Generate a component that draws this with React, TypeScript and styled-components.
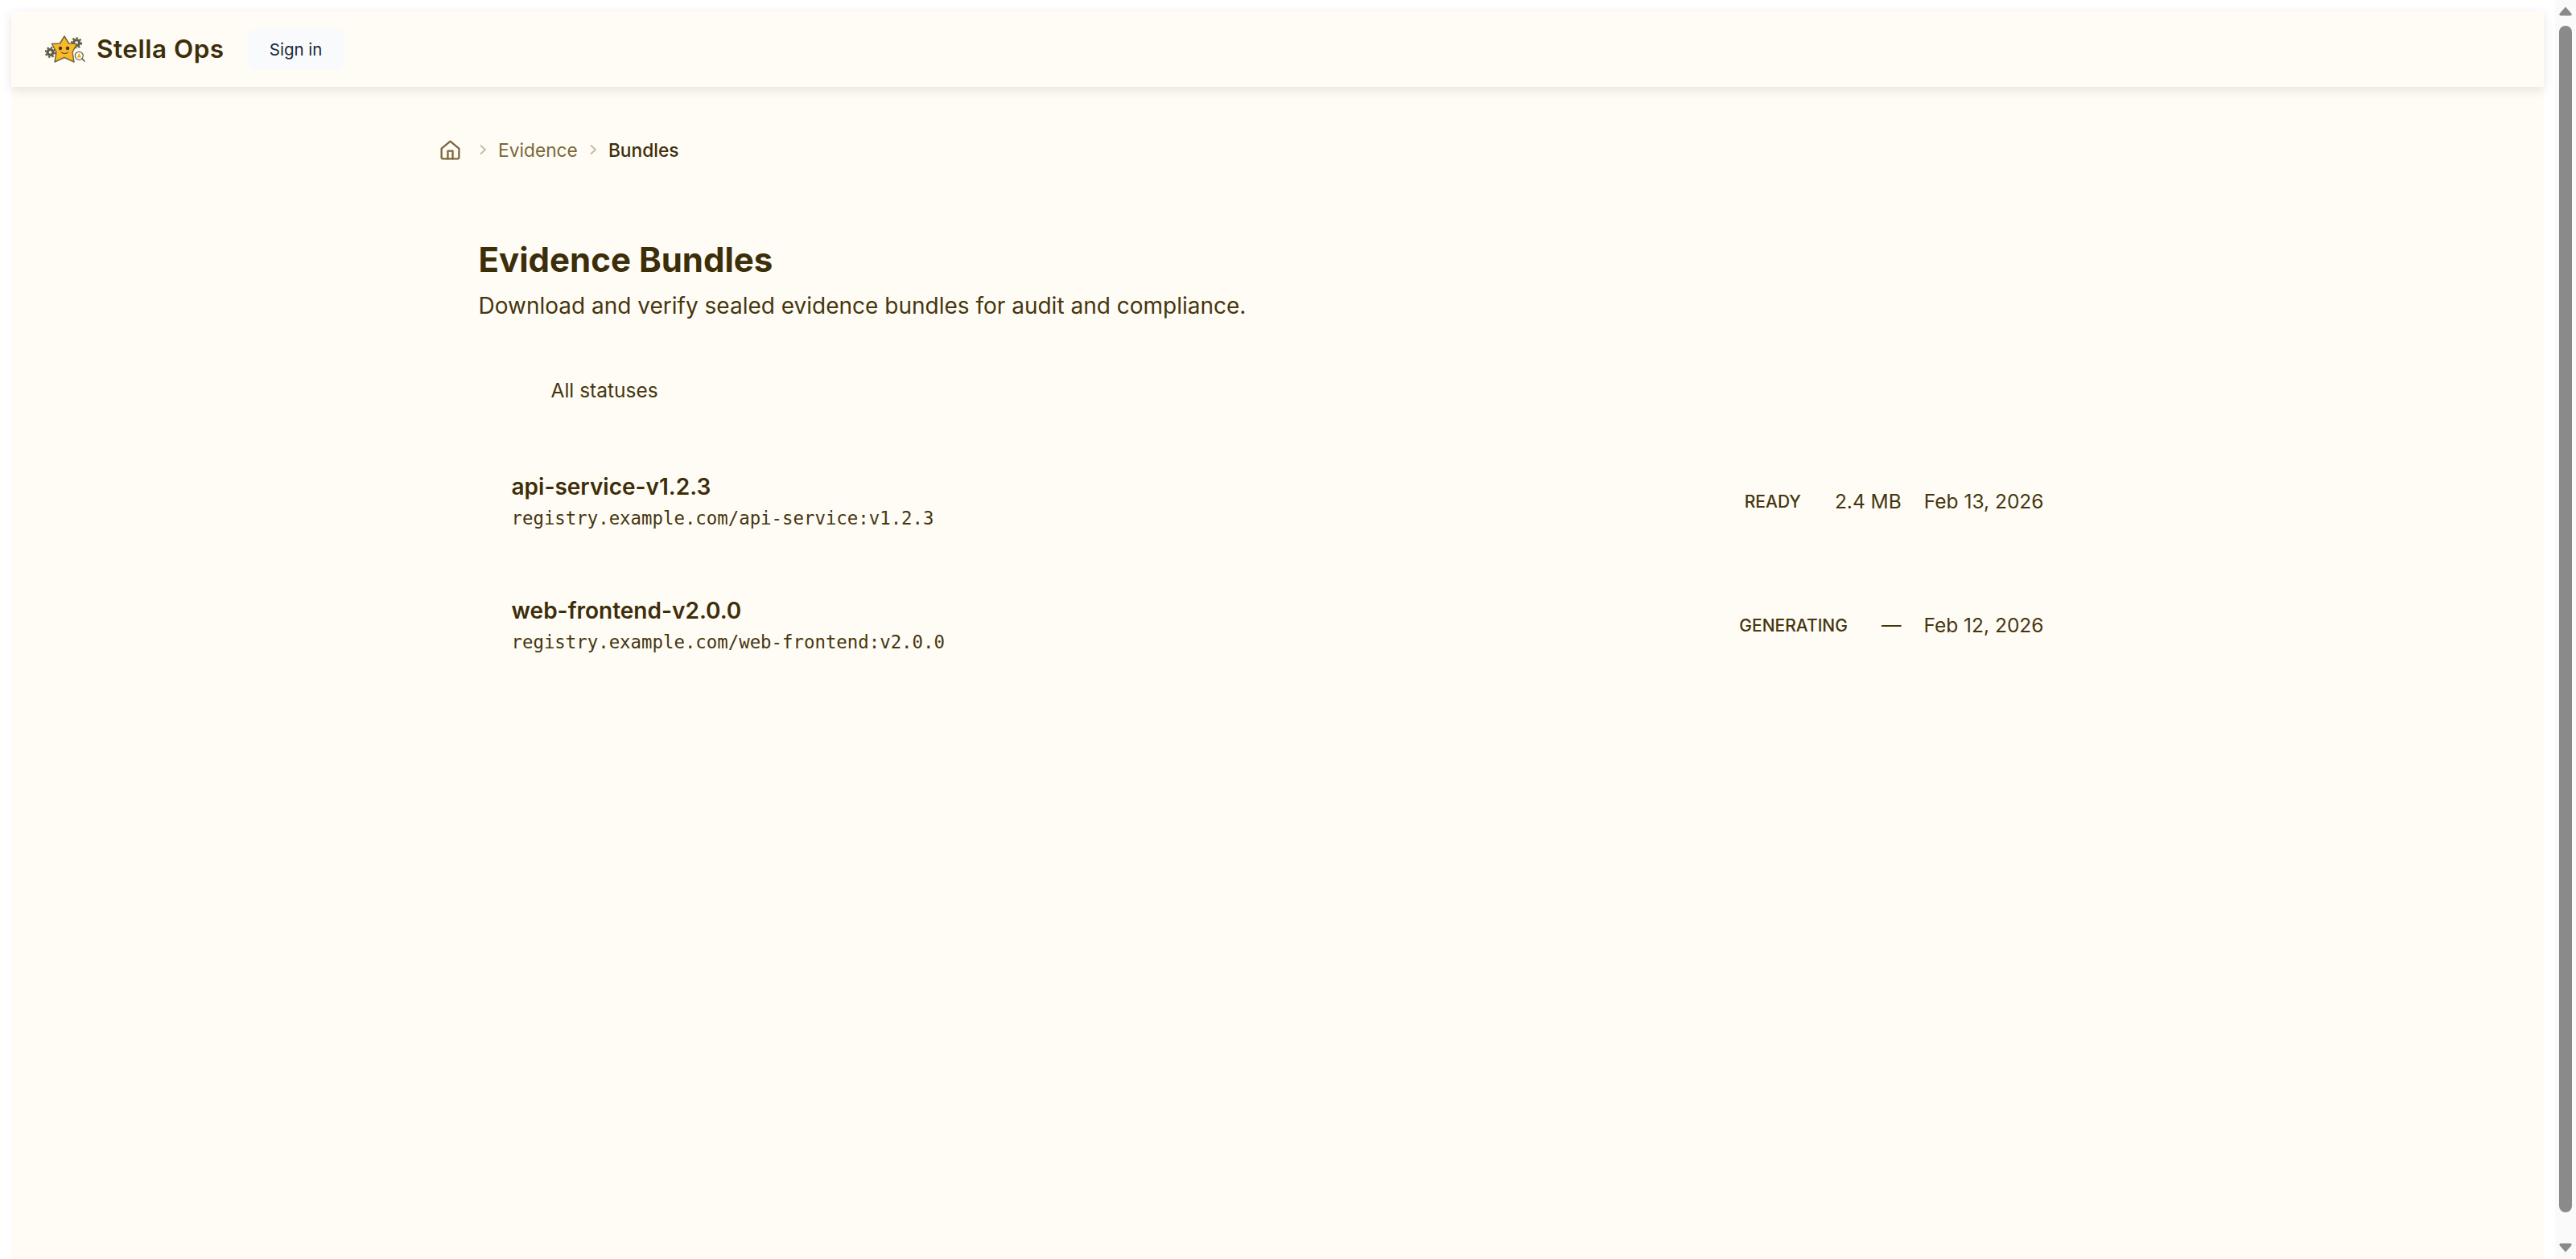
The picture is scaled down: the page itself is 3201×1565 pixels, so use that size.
import * as React from 'react';
import styled, { createGlobalStyle } from 'styled-components';

const GlobalStyle = createGlobalStyle`
  html, body {
    margin: 0;
    height: 100%;
    overflow: hidden;
    background: #ffffff;
  }
  body {
    font-family: Inter, 'Noto Sans', sans-serif;
    color: #3d2e0a;
  }
`;

const bundles = [
  { name: 'api-service-v1.2.3', image: 'registry.example.com/api-service:v1.2.3', status: 'READY', size: '2.4 MB', date: 'Feb 13, 2026' },
  { name: 'web-frontend-v2.0.0', image: 'registry.example.com/web-frontend:v2.0.0', status: 'GENERATING', size: '—', date: 'Feb 12, 2026' },
];

const Logo = () => (
  <svg width="50" height="34" viewBox="0 0 50 34" fill="none">
    <g stroke="#5f5d45">
      <circle cx="6.5" cy="21" r="3.4" strokeWidth="3.2" />
      <circle cx="6.5" cy="21" r="5.8" strokeWidth="2.2" strokeDasharray="2.4 2.1" />
      <circle cx="39" cy="9.3" r="3.6" strokeWidth="3" />
      <circle cx="39" cy="9.3" r="6" strokeWidth="2.2" strokeDasharray="2.4 2.1" />
    </g>
    <path
      d="M24 1 L29.5 10 L39.5 10.5 L34 21 L36 33 L24 27.5 L12 33 L14 21 L8.5 10.5 L18.5 10 Z"
      fill="#fbb829"
      stroke="#6d6a3a"
      strokeWidth="1.5"
      strokeLinejoin="round"
    />
    <circle cx="19" cy="16" r="2.2" fill="#3d3a22" />
    <circle cx="28" cy="16" r="2.2" fill="#3d3a22" />
    <path d="M20 21 C22 23 27 23 29 21" stroke="#3d3a22" strokeWidth="1" strokeLinecap="round" />
    <circle cx="42.3" cy="25.3" r="5" fill="#fffcf5" stroke="#6d6a4a" strokeWidth="1.3" />
    <path d="M42.3 22 L45 27.6 H39.6 Z" fill="#f0a92a" />
    <path d="M46 29 L49 32" stroke="#5f5d45" strokeWidth="1.7" strokeLinecap="round" />
  </svg>
);

const HomeIcon = () => (
  <HomeSvg width="29" height="29" viewBox="0 0 24 24" fill="none" stroke="#7a6738" strokeWidth="1.9" strokeLinecap="round" strokeLinejoin="round">
    <path d="M3 10.5 12 3l9 7.5V19.5a1.5 1.5 0 0 1-1.5 1.5h-15A1.5 1.5 0 0 1 3 19.5z" />
    <path d="M9.5 21v-8h5v8" />
  </HomeSvg>
);

const Chevron = () => (
  <ChevronSvg width="8" height="14" viewBox="0 0 8 14" fill="none" stroke="#c2b8a2" strokeWidth="1.7">
    <path d="M1 1.5 7 7l-6 5.5" />
  </ChevronSvg>
);

const App = () => {
  return (
    <>
      <GlobalStyle />
      <Screen>
        <Page>
          <Header>
            <Brand>
              <Logo />
              <BrandName>Stella Ops</BrandName>
            </Brand>
            <SignIn>Sign in</SignIn>
          </Header>
          <Main>
            <Breadcrumb>
              <HomeIcon />
              <Chevron />
              <CrumbLink>Evidence</CrumbLink>
              <Chevron />
              <CrumbCurrent>Bundles</CrumbCurrent>
            </Breadcrumb>
            <Content>
              <Title>Evidence Bundles</Title>
              <Subtitle>Download and verify sealed evidence bundles for audit and compliance.</Subtitle>
              <Filter>All statuses</Filter>
              <List>
                {bundles.map((bundle) => (
                  <Row key={bundle.name}>
                    <RowInfo>
                      <BundleName>{bundle.name}</BundleName>
                      <BundleImage>{bundle.image}</BundleImage>
                    </RowInfo>
                    <Status>{bundle.status}</Status>
                    <Meta>{bundle.size}</Meta>
                    <Meta>{bundle.date}</Meta>
                  </Row>
                ))}
              </List>
            </Content>
          </Main>
        </Page>
        <Scrollbar>
          <Arrow viewBox="0 0 16 12">
            <path d="M8 0.5 L15.5 9 Q16 11.5 14 11.5 H2 Q0 11.5 0.5 9 Z" />
          </Arrow>
          <ThumbSlot>
            <Thumb />
          </ThumbSlot>
          <Arrow viewBox="0 0 16 12">
            <path d="M8 11.5 L15.5 3 Q16 0.5 14 0.5 H2 Q0 0.5 0.5 3 Z" />
          </Arrow>
        </Scrollbar>
      </Screen>
    </>
  );
};

const Screen = styled.div`
  height: 100vh;
  display: flex;
  overflow: hidden;
`;

const Page = styled.div`
  flex: 1;
  margin: 14px 14px 0;
  background: #fffcf5;
  min-width: 0;
`;

const Header = styled.header`
  height: 94px;
  box-sizing: border-box;
  padding-left: 42px;
  display: flex;
  align-items: center;
  gap: 29px;
  box-shadow: 0 4px 12px rgba(61, 46, 10, 0.12);
`;

const Brand = styled.div`
  display: flex;
  align-items: center;
  gap: 14px;
`;

const BrandName = styled.span`
  font-size: 31.5px;
  font-weight: 600;
  letter-spacing: 0.5px;
  line-height: 36px;
  color: #3d2e0a;
`;

const SignIn = styled.button`
  width: 120px;
  height: 52px;
  border: none;
  border-radius: 12px;
  background: #f8fafc;
  color: #1e293b;
  font-family: inherit;
  font-size: 20.5px;
  padding: 0;
`;

const Main = styled.main`
  width: 2080px;
  margin: 0 auto;
  padding-top: 62px;
`;

const Breadcrumb = styled.nav`
  display: flex;
  align-items: center;
  height: 32px;
  gap: 15px;
  font-size: 22.75px;
`;

const HomeSvg = styled.svg`
  flex: none;
  margin: 0 7px 0 -2.5px;
`;

const ChevronSvg = styled.svg`
  flex: none;
`;

const CrumbLink = styled.span`
  color: #7a6738;
`;

const CrumbCurrent = styled.span`
  color: #3d2e0a;
  font-weight: 500;
`;

const Content = styled.div`
  padding: 97px 47px 0;
`;

const Title = styled.h1`
  margin: 0;
  font-size: 42px;
  line-height: 48px;
  font-weight: 700;
  color: #3d2e0a;
`;

const Subtitle = styled.p`
  margin: 15px 0 0;
  font-size: 28px;
  line-height: 36px;
  color: #45360f;
`;

const Filter = styled.div`
  margin: 71px 0 0 90px;
  font-size: 24.5px;
  line-height: 32px;
  color: #45360f;
`;

const List = styled.div`
  margin-top: 86px;
  display: flex;
  flex-direction: column;
  gap: 82px;
`;

const Row = styled.div`
  padding: 0 41px;
  display: flex;
  align-items: center;
  gap: 28px;
`;

const RowInfo = styled.div`
  flex: 1;
  display: flex;
  flex-direction: column;
  gap: 6px;
`;

const BundleName = styled.div`
  font-size: 28px;
  line-height: 36px;
  font-weight: 600;
  color: #3d2e0a;
`;

const BundleImage = styled.code`
  font-family: 'DejaVu Sans Mono', monospace;
  font-size: 22.36px;
  line-height: 30px;
  color: #45360f;
`;

const Status = styled.span`
  font-size: 21px;
  font-weight: 500;
  color: #45360f;
  padding-right: 14px;
`;

const Meta = styled.span`
  font-size: 24.5px;
  color: #45360f;
`;

const Scrollbar = styled.div`
  width: 26px;
  flex: none;
  background: #fafafa;
  display: flex;
  flex-direction: column;
  align-items: center;
  padding: 8px 0;
  box-sizing: border-box;
`;

const Arrow = styled.svg`
  width: 16px;
  height: 12px;
  flex: none;
  fill: #8a8a8a;
`;

const ThumbSlot = styled.div`
  flex: 1;
  width: 16px;
  padding: 12px 0 38px;
  box-sizing: border-box;
  display: flex;
`;

const Thumb = styled.div`
  flex: 1;
  background: #8a8a8a;
  border-radius: 8px;
`;

export default App;
